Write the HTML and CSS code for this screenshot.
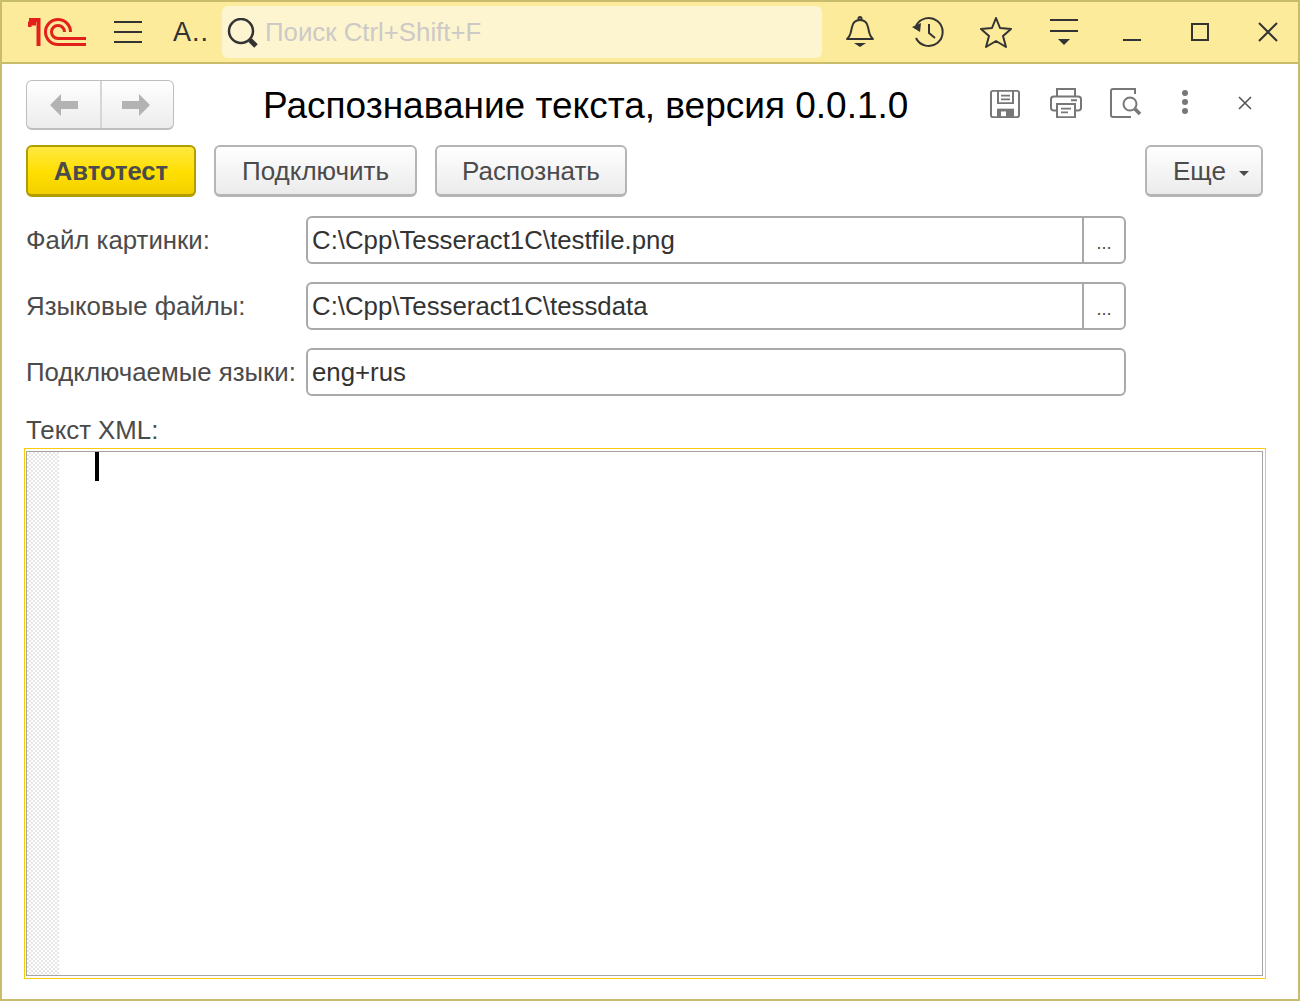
FILE: index.html
```html
<!DOCTYPE html>
<html lang="ru">
<head>
  <meta charset="UTF-8" />
  <title>Распознавание текста</title>
  <link rel="stylesheet" href="styles.css">
</head>
<body>
  <div class="window">
    <header class="topbar">
      <svg class="logo" width="58" height="28" viewBox="0 0 58 28" fill="none" stroke="#e2201c" stroke-width="3">
        <path d="M1.500 9V5.500H8M10.500 0v28" stroke-width="4"/>
        <path d="M1 2h9" stroke-width="4"/>
        <path d="M42.500 14A12.500 12.500 0 1 0 30 26.500H58"/>
        <path d="M36.500 14A6.500 6.500 0 1 0 30 20.500H58"/>
      </svg>
      <svg class="burger" width="28" height="22" viewBox="0 0 28 22" fill="none" stroke="#333" stroke-width="2">
        <path d="M0 1h28M0 11h28M0 21h28"/>
      </svg>
      <span class="section">А..</span>
      <div class="search">
        <svg class="search-icon" width="32" height="32" viewBox="0 0 32 32" fill="none" stroke="#333">
          <circle cx="14" cy="13" r="12" stroke-width="2.5"/>
          <path d="M23 22l6 6" stroke-width="5"/>
        </svg>
        <span class="search-text">Поиск Ctrl+Shift+F</span>
      </div>
      <div class="top-icons">
        <svg width="30" height="32" viewBox="0 0 30 32" fill="none" stroke="#333" stroke-width="2">
          <path d="M2 23c4-3 4-8 5-12 1-5 4-7 8-7s7 2 8 7c1 4 1 9 5 12z" stroke-linejoin="round"/>
          <circle cx="15" cy="2.5" r="1.5"/>
          <path d="M9 27h12l-6 4z" fill="#333" stroke="none"/>
        </svg>
        <svg width="32" height="32" viewBox="0 0 32 32" fill="none" stroke="#333" stroke-width="2">
          <path d="M4 10A14 14 0 1 1 4 22"/>
          <path d="M0 11l9-4-1 9z" fill="#333" stroke="none"/>
          <path d="M17 8v9l6 5"/>
        </svg>
        <svg width="32" height="32" viewBox="0 0 32 32" fill="none" stroke="#333" stroke-width="2">
          <path d="M16 2l4 10 11 1-8 7 3 11-10-6-10 6 3-11-8-7 11-1z" stroke-linejoin="round"/>
        </svg>
        <svg width="30" height="27" viewBox="0 0 30 27" fill="none" stroke="#333" stroke-width="2">
          <path d="M1 1h28M1 12h28"/>
          <path d="M9 20h12l-6 6z" fill="#333" stroke="none"/>
        </svg>
        <svg width="20" height="20" viewBox="0 0 20 20" fill="none" stroke="#333" stroke-width="2">
          <path d="M1 18h18"/>
        </svg>
        <svg width="20" height="20" viewBox="0 0 20 20" fill="none" stroke="#333" stroke-width="2">
          <rect x="2" y="2" width="16" height="16"/>
        </svg>
        <svg width="22" height="22" viewBox="0 0 22 22" fill="none" stroke="#333" stroke-width="2">
          <path d="M2 2l18 18M20 2L2 20"/>
        </svg>
      </div>
    </header>

    <main class="form">
      <div class="form-head">
        <div class="nav-buttons">
          <div class="nav-button nav-back">
            <svg width="28" height="22" viewBox="0 0 28 22" fill="#b3b3b3"><path d="M0 11L11 0v7h17v8H11v7z"/></svg>
          </div>
          <div class="nav-button nav-forward">
            <svg width="28" height="22" viewBox="0 0 28 22" fill="#b3b3b3"><path d="M28 11L17 0v7H0v8h17v7z"/></svg>
          </div>
        </div>
        <h1 class="title">Распознавание текста, версия 0.0.1.0</h1>
        <div class="form-icons">
          <svg class="icon-save" width="30" height="28" viewBox="0 0 30 30" preserveAspectRatio="none" fill="none" stroke="#777" stroke-width="2">
            <path d="M3 1h24a2 2 0 0 1 2 2v24a2 2 0 0 1-2 2H3a2 2 0 0 1-2-2V3a2 2 0 0 1 2-2z"/>
            <path d="M8 1v13h15V1M11 6h9M11 10h9"/>
            <path d="M7 29v-9h17v9z" fill="#777" stroke="none"/>
            <rect x="11" y="23" width="5" height="5" fill="#fff" stroke="none"/>
          </svg>
          <svg class="icon-print" width="32" height="30" viewBox="0 0 32 32" preserveAspectRatio="none" fill="none" stroke="#777" stroke-width="2">
            <path d="M7 9V1h18v8M7 24H4a3 3 0 0 1-3-3V12a3 3 0 0 1 3-3h24a3 3 0 0 1 3 3v9a3 3 0 0 1-3 3h-3"/>
            <path d="M7 17h18v14H7zM11 22h10M11 26h7M21 13h6"/>
          </svg>
          <svg width="32" height="30" viewBox="0 0 32 30" fill="none" stroke="#777" stroke-width="2">
            <path d="M25 6V1H3a2 2 0 0 0-2 2v24a2 2 0 0 0 2 2h18"/>
            <circle cx="20" cy="16" r="6.5"/>
            <path d="M25 21l5 5" stroke-width="3.5"/>
          </svg>
          <svg class="dots" width="6" height="24" viewBox="0 0 6 24" fill="#777">
            <circle cx="3" cy="3" r="3"/><circle cx="3" cy="12" r="3"/><circle cx="3" cy="21" r="3"/>
          </svg>
          <svg class="form-close" width="14" height="14" viewBox="0 0 14 14" fill="none" stroke="#555" stroke-width="1.6">
            <path d="M1 1l12 12M13 1L1 13"/>
          </svg>
        </div>
      </div>

      <div class="command-bar">
        <button class="btn btn-default">Автотест</button>
        <button class="btn btn-connect">Подключить</button>
        <button class="btn btn-recognize">Распознать</button>
        <button class="btn btn-more">Еще<span class="caret"></span></button>
      </div>

      <div class="field-row">
        <label class="field-label">Файл картинки:</label>
        <div class="input">
          <span class="input-value">C:\Cpp\Tesseract1C\testfile.png</span>
          <span class="choice">...</span>
        </div>
      </div>
      <div class="field-row">
        <label class="field-label">Языковые файлы:</label>
        <div class="input">
          <span class="input-value">C:\Cpp\Tesseract1C\tessdata</span>
          <span class="choice">...</span>
        </div>
      </div>
      <div class="field-row">
        <label class="field-label">Подключаемые языки:</label>
        <div class="input">
          <span class="input-value">eng+rus</span>
        </div>
      </div>

      <div class="editor-label">Текст XML:</div>
      <div class="editor-frame">
        <div class="editor">
          <div class="gutter"></div>
          <div class="caret-line"></div>
        </div>
      </div>
    </main>
  </div>
</body>
</html>
```
FILE: styles.css
```css
* {
  box-sizing: border-box;
}

body {
  margin: 0;
  background-color: #fff;
  color: #4b4b4b;
  font-family: "Liberation Sans", Arial, sans-serif;
}

.window {
  width: 1300px;
  height: 1001px;
  border: 2px solid #c9bc6d;
  display: flex;
  flex-direction: column;
  overflow: hidden;
}

.topbar {
  height: 62px;
  flex: none;
  display: flex;
  align-items: center;
  background-color: #fbeb9b;
  border-bottom: 2px solid #c9bc6d;
  padding-left: 26px;
}

.topbar > * {
  flex: none;
}

.burger {
  margin-left: 28px;
}

.section {
  margin-left: 31px;
  width: 49px;
  font-size: 27px;
  letter-spacing: 1px;
  color: #333;
}

.search {
  width: 600px;
  height: 52px;
  display: flex;
  align-items: center;
  padding-left: 5px;
  background-color: #fdf5d0;
  border-radius: 6px;
}

.search-icon {
  margin-top: 4px;
}

.search-text {
  margin-left: 6px;
  font-size: 25.8px;
  color: #ccc9c6;
}

.top-icons {
  display: grid;
  grid-auto-flow: column;
  grid-auto-columns: 68px;
  justify-items: center;
  align-items: center;
  margin-left: 4px;
}

.form {
  flex: 1;
  display: flex;
  flex-direction: column;
  padding: 16px 35px 20px 24px;
}

.form-head {
  height: 50px;
  display: flex;
  align-items: center;
}

.nav-buttons {
  width: 148px;
  height: 50px;
  flex: none;
  display: flex;
  border: 1px solid #bdbdbd;
  border-bottom-width: 2px;
  border-radius: 6px;
  background: linear-gradient(#fff, #ececec);
}

.nav-button {
  display: flex;
  align-items: center;
  justify-content: center;
}

.nav-back {
  width: 73px;
}

.nav-forward {
  flex: 1;
  padding-right: 4px;
  border-left: 2px solid #d6d6d6;
}

.title {
  margin: 0 0 0 89px;
  padding-top: 1px;
  width: 727px;
  flex: none;
  font-size: 37px;
  font-weight: normal;
  color: #000;
  white-space: nowrap;
}

.form-icons {
  display: flex;
  align-items: center;
  gap: 28px;
  margin-bottom: 4px;
}

.icon-save {
  margin-top: 2px;
}

.icon-print {
  margin-left: 2px;
}

.dots {
  margin-left: 12px;
  margin-bottom: 2px;
}

.form-close {
  margin-left: 22px;
}

.command-bar {
  margin-top: 15px;
  height: 52px;
  display: flex;
  gap: 18px;
}

.btn {
  height: 52px;
  padding: 2px 0 0;
  border: 2px solid #b5b5b5;
  border-bottom-width: 3px;
  border-radius: 6px;
  background: linear-gradient(#fff, #ebebeb);
  color: #4b4b4b;
  font-family: inherit;
  font-size: 26px;
}

.btn-default {
  width: 170px;
  border-color: #b39c00;
  background: linear-gradient(#ffe840, #ffdf00 55%, #f2d000);
  font-weight: bold;
  font-size: 25.6px;
}

.btn-connect {
  width: 203px;
}

.btn-recognize {
  width: 192px;
}

.btn-more {
  width: 118px;
  margin-left: auto;
  text-align: left;
  padding-left: 26px;
}

.caret {
  display: inline-block;
  margin-left: 13px;
  vertical-align: middle;
  border: 5px solid transparent;
  border-top: 5px solid #4b4b4b;
  border-bottom: 0;
}

.field-row {
  display: flex;
  align-items: center;
  height: 48px;
  margin-top: 18px;
}

.command-bar + .field-row {
  margin-top: 19px;
}

.field-label {
  width: 280px;
  font-size: 25.8px;
  white-space: nowrap;
}

.input {
  width: 820px;
  height: 48px;
  display: flex;
  align-items: center;
  border: 2px solid #a9a9a9;
  border-radius: 6px;
  background-color: #fff;
}

.input-value {
  flex: 1;
  padding-left: 4px;
  font-size: 25.8px;
  color: #333;
}

.choice {
  width: 42px;
  height: 100%;
  flex: none;
  border-left: 2px solid #a9a9a9;
  text-align: center;
  font-size: 18px;
  line-height: 50px;
  color: #4b4b4b;
}

.editor-label {
  margin-top: 19px;
  font-size: 25.8px;
  line-height: 30px;
}

.editor-frame {
  margin: 3px -2px 0 -2px;
  flex: 1;
  width: 1242px;
  padding: 2px 2px 2px 1px;
  border: 1px solid #fdc90c;
}

.editor {
  height: 100%;
  display: flex;
  border: 1px solid #a5a5a5;
  background-color: #fff;
}

.gutter {
  width: 32px;
  background: repeating-conic-gradient(#e6e6e6 0 25%, #fff 0 50%) 0 0 / 4px 4px;
}

.caret-line {
  width: 4px;
  height: 29px;
  margin-left: 36px;
  background-color: #000;
}
```
